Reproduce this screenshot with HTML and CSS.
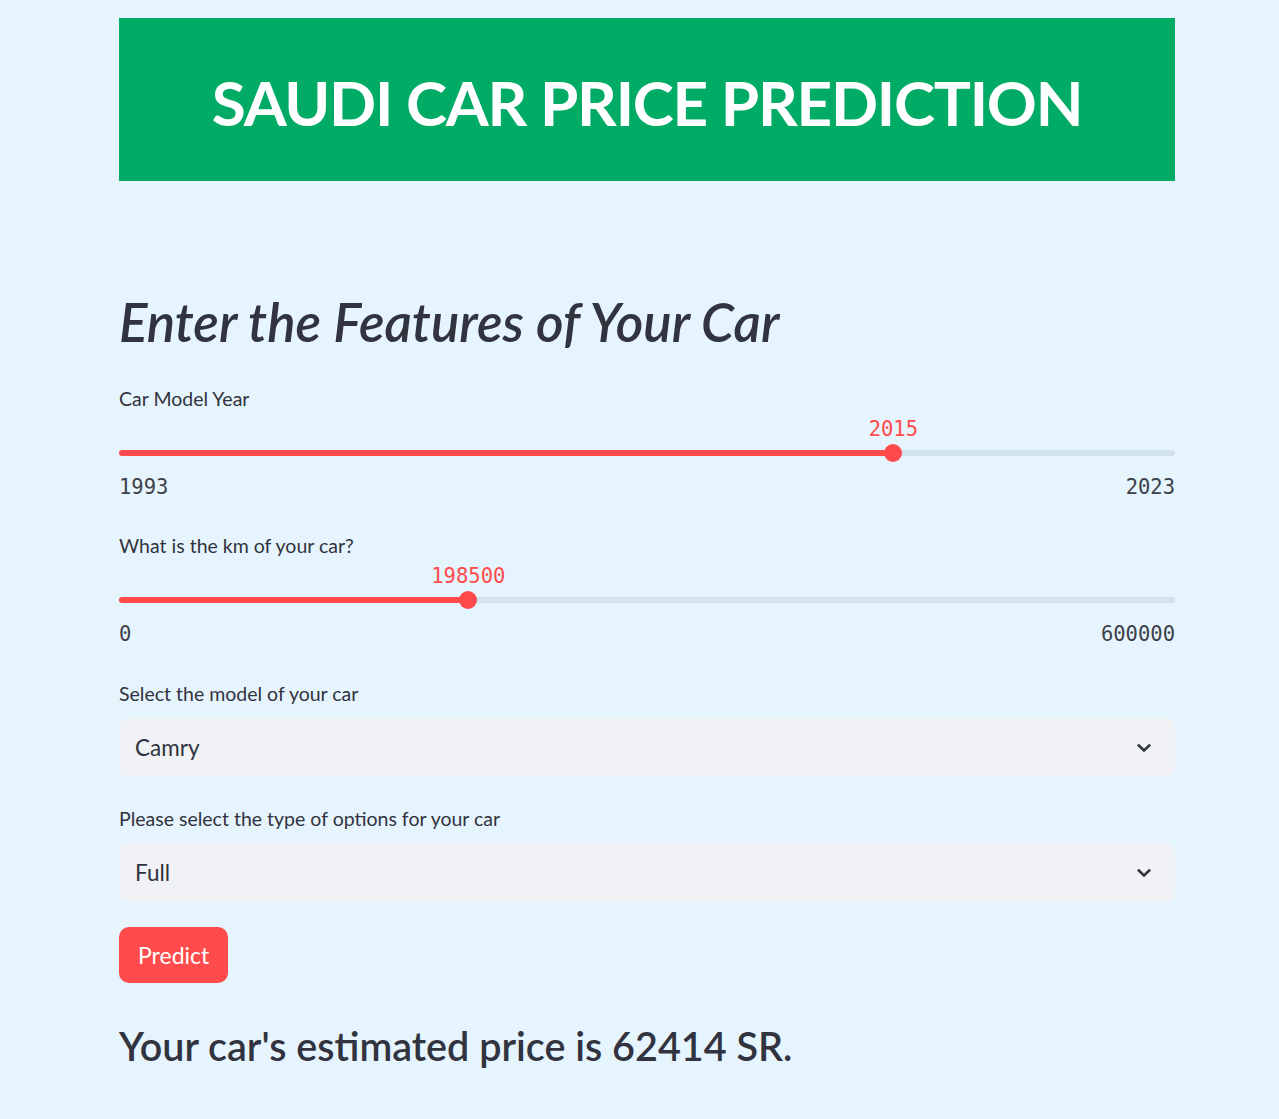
FILE: index.html
```html
<!DOCTYPE html>
<html>
<head>
<meta charset="utf-8">
<link rel="stylesheet" href="styles.css">
</head>
<body>
<main class="page">
  <div class="banner"><h1 class="banner-title">SAUDI CAR PRICE PREDICTION</h1></div>
  <h2 class="section-title">Enter the Features of Your Car</h2>

  <div class="field slider-field first">
    <div class="label">Car Model Year</div>
    <div class="slider">
      <div class="track"><div class="fill" style="width:73.33%"></div>
        <div class="thumb" style="left:73.33%"><span class="thumb-value">2015</span></div>
      </div>
    </div>
    <div class="ticks"><span>1993</span><span>2023</span></div>
  </div>

  <div class="field slider-field">
    <div class="label">What is the km of your car?</div>
    <div class="slider">
      <div class="track"><div class="fill" style="width:33.08%"></div>
        <div class="thumb" style="left:33.08%"><span class="thumb-value">198500</span></div>
      </div>
    </div>
    <div class="ticks"><span>0</span><span>600000</span></div>
  </div>

  <div class="field after-slider">
    <div class="label">Select the model of your car</div>
    <div class="select"><span>Camry</span>
      <svg class="chev" width="18" height="18" viewBox="0 0 18 18"><path d="M3.8 6.5 L9 11.5 L14.2 6.5" fill="none" stroke="#31333F" stroke-width="2.6" stroke-linecap="square"/></svg>
    </div>
  </div>

  <div class="field after-select">
    <div class="label">Please select the type of options for your car</div>
    <div class="select"><span>Full</span>
      <svg class="chev" width="18" height="18" viewBox="0 0 18 18"><path d="M3.8 6.5 L9 11.5 L14.2 6.5" fill="none" stroke="#31333F" stroke-width="2.6" stroke-linecap="square"/></svg>
    </div>
  </div>

  <button class="predict">Predict</button>

  <h3 class="result">Your car's estimated price is 62414 SR.</h3>
</main>
</body>
</html>
```

FILE: styles.css
```css
html, body {
  margin: 0;
  padding: 0;
  background: #e6f4fd;
}
body {
  font-family: "Lato", "Noto Sans", sans-serif;
  color: #31333f;
}
.page {
  width: 1056px;
  margin: 0 auto 0 119px;
  padding-top: 18px;
  padding-bottom: 40px;
}
.banner {
  background: #00ab66;
  height: 163px;
  display: flex;
  align-items: center;
  justify-content: center;
}
.banner-title {
  margin: 0;
  color: #ffffff;
  font-weight: 700;
  font-size: 62px;
  letter-spacing: -1.25px;
  position: relative;
  top: 2px;
}
.section-title {
  margin: 106px 0 0 0;
  font-style: italic;
  font-weight: 600;
  font-size: 53px;
  line-height: 70px;
  color: #31333f;
}
.field.first {
  margin-top: 30px;
}
.slider-field + .slider-field {
  margin-top: 35px;
}
.field.after-slider {
  margin-top: 36px;
}
.field.after-select {
  margin-top: 30px;
}
.label {
  font-size: 19.5px;
  line-height: 24px;
  color: #31333f;
}
.slider {
  height: 56px;
  position: relative;
  display: flex;
  align-items: flex-end;
}
.track {
  position: relative;
  width: 100%;
  height: 6px;
  border-radius: 3px;
  background: #d3e2ef;
  margin-bottom: 11px;
}
.fill {
  height: 100%;
  background: #ff4b4b;
  border-radius: 3px;
}
.thumb {
  position: absolute;
  top: 50%;
  width: 18px;
  height: 18px;
  margin-left: -9px;
  margin-top: -9px;
  border-radius: 50%;
  background: #ff4b4b;
}
.thumb-value {
  position: absolute;
  bottom: 21px;
  left: 50%;
  transform: translateX(-50%);
  font-family: "DejaVu Sans Mono", monospace;
  font-size: 20.5px;
  color: #ff4b4b;
  white-space: nowrap;
}
.ticks {
  margin-top: 8px;
  display: flex;
  justify-content: space-between;
  font-family: "DejaVu Sans Mono", monospace;
  font-size: 20.5px;
  line-height: 24px;
  color: #3d3f4a;
}
.select {
  margin-top: 12px;
  height: 59px;
  background: #f0f2f6;
  border-radius: 10px;
  display: flex;
  align-items: center;
  justify-content: space-between;
  padding: 0 22px 0 16px;
  font-size: 22.5px;
}
.chev {
  display: block;
}
.predict {
  display: block;
  margin-top: 25px;
  height: 56px;
  padding: 0 19px;
  border: none;
  border-radius: 10px;
  background: #ff4b4b;
  color: #ffffff;
  font-family: "Lato", "Noto Sans", sans-serif;
  font-size: 23px;
}
.result {
  margin: 35px 0 0 0;
  font-weight: 600;
  font-size: 39.5px;
  line-height: 56px;
  color: #31333f;
}
```
